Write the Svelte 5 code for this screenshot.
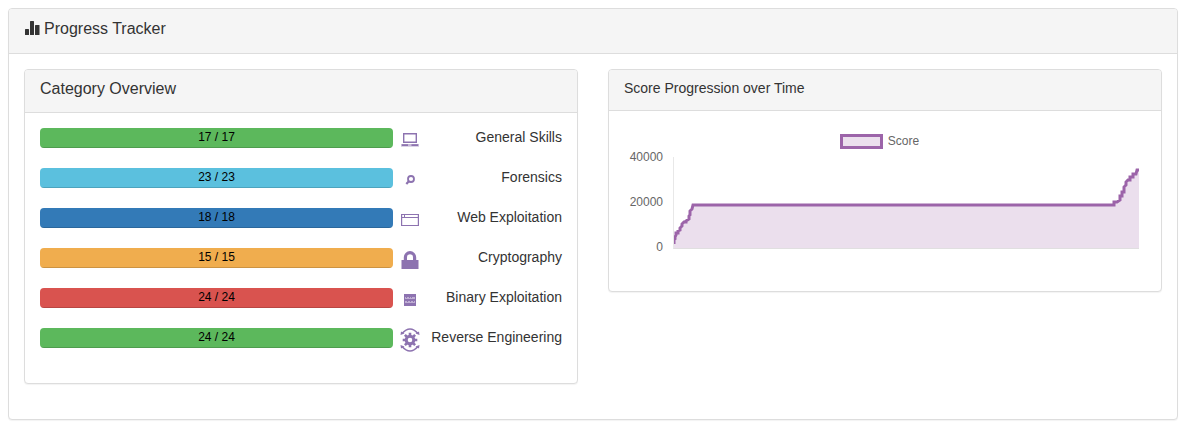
<script>
  const categories = [
    { name: 'General Skills', solved: 17, total: 17, tone: 'green', icon: 'laptop' },
    { name: 'Forensics', solved: 23, total: 23, tone: 'cyan', icon: 'search' },
    { name: 'Web Exploitation', solved: 18, total: 18, tone: 'blue', icon: 'window' },
    { name: 'Cryptography', solved: 15, total: 15, tone: 'orange', icon: 'lock' },
    { name: 'Binary Exploitation', solved: 24, total: 24, tone: 'red', icon: 'binary' },
    { name: 'Reverse Engineering', solved: 24, total: 24, tone: 'green', icon: 'gear' }
  ];

  const ticks = [40000, 20000, 0];

  // Score line in plot units: 465 wide, 91 high.
  const score =
    'M0 87V83L1 82V80L2 78V76H4V74L6 73V71L8 69V67L10 65H12V64L15 62V59L16 58V54L18 52L19 48H440V45H443L446 43V39H448V35H450V30L452 28V25L454 23H456V20H459V17H462L463 13H465';
</script>

<section class="panel outer">
  <header class="heading main">
    <h1>
      <svg class="stats" viewBox="0 0 16 16" aria-hidden="true">
        <rect x="1" y="9" width="4" height="6" rx="0.500" />
        <rect x="6" y="1" width="4" height="14" rx="0.500" />
        <rect x="11" y="5" width="4.500" height="10" rx="0.500" />
      </svg>
      Progress Tracker
    </h1>
  </header>
  <div class="columns">
    <section class="panel">
      <header class="heading"><h2>Category Overview</h2></header>
      <div class="body">
        {#each categories as c}
          <div class="row">
            <div class="track">
              <div class="progress">
                <div class="fill {c.tone}" style="width: {(c.solved / c.total) * 100}%"></div>
                <span>{c.solved} / {c.total}</span>
              </div>
            </div>
            <div class="meta">
              <svg class="icon" viewBox="0 0 20 24" aria-hidden="true">
                {#if c.icon === 'laptop'}
                  <path class="stroke" stroke-width="1.400" d="M3.700 5.700h12.600v8.600H3.700z" />
                  <path opacity=".5" d="M1 16h18v2.600H1z" />
                  <path d="M2 16.300h6v1.700H2zM11.500 16.300H18V18h-6.500z" />
                {:else if c.icon === 'search'}
                  <circle class="stroke" cx="11" cy="11" r="3" stroke-width="1.800" />
                  <path class="stroke" d="M8.800 13.300 6.300 16" stroke-width="2.200" />
                {:else if c.icon === 'window'}
                  <path class="stroke" stroke-width="1.200" d="M1.600 6.500h16.800v11H1.600z" />
                  <path class="stroke" stroke-width="1" d="M1.600 9.500h16.800M4.500 7v2" />
                {:else if c.icon === 'lock'}
                  <path d="M1.500 12h2.300V9.500a6.200 6.500 0 0 1 12.400 0V12h2.300v9h-17zM7 12h6V9.500a3 3.200 0 0 0-6 0z" fill-rule="evenodd" />
                {:else if c.icon === 'binary'}
                  <path d="M4 6h12v12H4z" />
                  <path class="digits" d="M5 9.500h1M7 9.500h2M10 9.500h1M12 9.500h3M5 10.500h10M5 13.500h2M8 13.500h2M11 13.500h2M14 13.500h1M5 14.500h10" />
                {:else}
                  <path class="stroke" d="M2 5.500Q10-3.500 18 5.500M2 18.500Q10 27.500 18 18.500" stroke-width="1.500" />
                  <path d="M0.500 7l.5-3.500 3.500 2zM19.500 7l-.5-3.500-3.500 2zM0.500 17l.5 3.500 3.500-2zM19.500 17l-.5 3.500-3.500-2z" />
                  <circle class="stroke" cx="10" cy="12" r="3.800" stroke-width="3" />
                  <path class="stroke" stroke-width="2.600" d="M10 4.700v2.800M10 16.500v2.800M2.700 12h2.800M14.500 12h2.800M4.900 6.900l2 2M13.100 15.100l2 2M4.900 17.100l2-2M13.100 8.900l2-2" />
                {/if}
              </svg>
              <span>{c.name}</span>
            </div>
          </div>
        {/each}
      </div>
    </section>

    <section class="panel">
      <header class="heading"><h3>Score Progression over Time</h3></header>
      <div class="body">
        <figure class="chart">
          <figcaption class="legend"><i></i>Score</figcaption>
          <div class="graph">
            <div class="axis">
              {#each ticks as t}<span>{t}</span>{/each}
            </div>
            <svg class="plot" viewBox="0 0 465 91" preserveAspectRatio="none" aria-hidden="true">
              <path class="area" d="{score}V91H0z" />
              <path class="score" d={score} />
            </svg>
          </div>
        </figure>
      </div>
    </section>
  </div>
</section>

<style>
  :global(body) {
    background: #fff;
  }
  .outer {
    margin: 8px 7px 8px 8px;
    font-family: "Liberation Sans", Arial, sans-serif;
    font-size: 14px;
    line-height: 20px;
    color: #333;
  }
  .panel {
    box-sizing: border-box;
    min-width: 0;
    border: 1px solid #ddd;
    border-radius: 4px;
    background: #fff;
    box-shadow: 0 1px 1px rgba(0, 0, 0, 0.05);
  }
  .heading {
    padding: 8px 15px 12px;
    background: #f5f5f5;
    border-bottom: 1px solid #ddd;
    border-radius: 3px 3px 0 0;
  }
  .main {
    padding: 10px 15px;
  }
  h1, h2, h3 {
    margin: 0;
    font-size: 16px;
    font-weight: 400;
    line-height: 22px;
  }
  h1 {
    display: flex;
    align-items: flex-start;
    gap: 4px;
    height: 24px;
    line-height: 20px;
  }
  h3 {
    font-size: 14px;
    line-height: 20px;
  }
  .stats {
    width: 16px;
    height: 18px;
    fill: #333;
  }
  .columns {
    display: grid;
    grid-template-columns: 1fr 1fr;
    align-items: start;
    gap: 30px;
    padding: 15px 15px 35px;
  }
  .body {
    padding: 15px;
  }
  .row {
    display: flex;
    height: 40px;
    margin: 0 -15px;
  }
  .track {
    box-sizing: border-box;
    width: 66.667%;
    padding-left: 15px;
  }
  .progress {
    position: relative;
    height: 20px;
    overflow: hidden;
    border-radius: 4px;
    background: #f5f5f5;
  }
  .progress span {
    position: absolute;
    inset: 0;
    text-align: center;
    font-size: 12px;
    line-height: 18px;
    color: #000;
  }
  .fill {
    height: 100%;
    box-shadow: inset 0 -1px 0 rgba(0, 0, 0, 0.15);
  }
  .green { background: #5cb85c; }
  .cyan { background: #5bc0de; }
  .blue { background: #337ab7; }
  .orange { background: #f0ad4e; }
  .red { background: #d9534f; }
  .meta {
    box-sizing: border-box;
    display: flex;
    justify-content: space-between;
    width: 33.333%;
    padding: 0 15px 0 7px;
    line-height: 18px;
    white-space: nowrap;
  }
  .icon {
    flex: none;
    width: 20px;
    height: 24px;
    fill: #8d73b0;
  }
  .stroke {
    fill: none;
    stroke: #8d73b0;
  }
  .digits {
    stroke: #bfaed3;
    stroke-width: 1;
  }
  .chart {
    box-sizing: border-box;
    height: 150px;
    margin: 0;
    padding: 8px 7px 0 0;
    color: #666;
    font-size: 12px;
  }
  .legend {
    display: flex;
    justify-content: center;
    gap: 5px;
    height: 23px;
    padding-right: 4px;
    line-height: 14px;
  }
  .legend i {
    box-sizing: border-box;
    width: 43px;
    height: 15px;
    border: 3px solid #9c64a9;
    background: #ebdfed;
  }
  .graph {
    display: flex;
    gap: 10px;
  }
  .axis {
    display: flex;
    flex-direction: column;
    justify-content: space-between;
    width: 39px;
    height: 104px;
    margin-top: -7px;
    line-height: 14px;
    text-align: right;
  }
  .plot {
    flex: 1;
    min-width: 0;
    box-sizing: border-box;
    height: 92px;
    border-left: 1px solid #e8e8e8;
    border-bottom: 1px solid #e0dfe0;
  }
  .area {
    fill: #ebdfed;
  }
  .score {
    fill: none;
    stroke: #9c64a9;
    stroke-width: 3;
    vector-effect: non-scaling-stroke;
  }
</style>
